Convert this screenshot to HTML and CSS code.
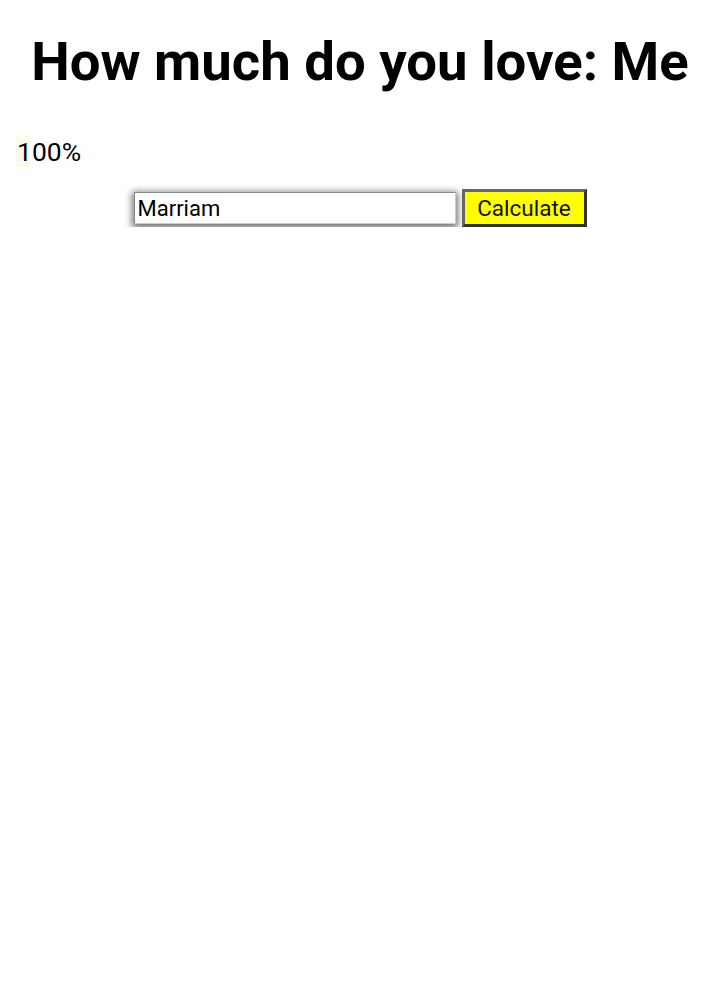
FILE: index.html
```html
<!DOCTYPE html>
<html>
<head>
<meta charset="utf-8">
<link rel="stylesheet" href="styles.css">
</head>
<body>
<h1 class="title">How much do you love: Me</h1>
<div class="result"><span class="percent">100%</span></div>
<div class="form">
  <input class="name" type="text" value="Marriam">
  <button class="calc">Calculate</button>
</div>
</body>
</html>
```
FILE: styles.css
```css
body {
  margin: 8px;
  font-family: Roboto, "Liberation Sans", sans-serif;
  background: #fff;
  color: #000;
}
.title {
  font-size: 54.5px;
  font-weight: 700;
  text-align: center;
  margin: 21px 0 0;
  line-height: 1.2;
}
.result {
  margin-top: 42px;
  padding-left: 8px;
}
.percent {
  font-size: 26.5px;
  display: inline-block;
  background: linear-gradient(to right, #fcfbea 0, #fcfbea 14px, transparent 14px);
  padding-left: 1px;
}
.form {
  display: flex;
  justify-content: center;
  align-items: center;
  gap: 6px;
  margin-top: 22px;
}
.name {
  width: 322px;
  height: 32px;
  box-sizing: border-box;
  border: 1px solid #999;
  border-color: #888 #ccc #ccc #888;
  font-family: Roboto, "Liberation Sans", sans-serif;
  font-size: 22px;
  padding: 0 3px;
  box-shadow: 0 2px 7px 2px rgba(0,0,0,0.55);
  color: #000;
}
.calc {
  height: 38px;
  width: 125px;
  box-sizing: border-box;
  background: #ffff00;
  border: 3px solid;
  border-color: #666 #333 #333 #666;
  font-family: Roboto, "Liberation Sans", sans-serif;
  font-size: 22.5px;
  color: #111;
  padding: 0;
}
```
